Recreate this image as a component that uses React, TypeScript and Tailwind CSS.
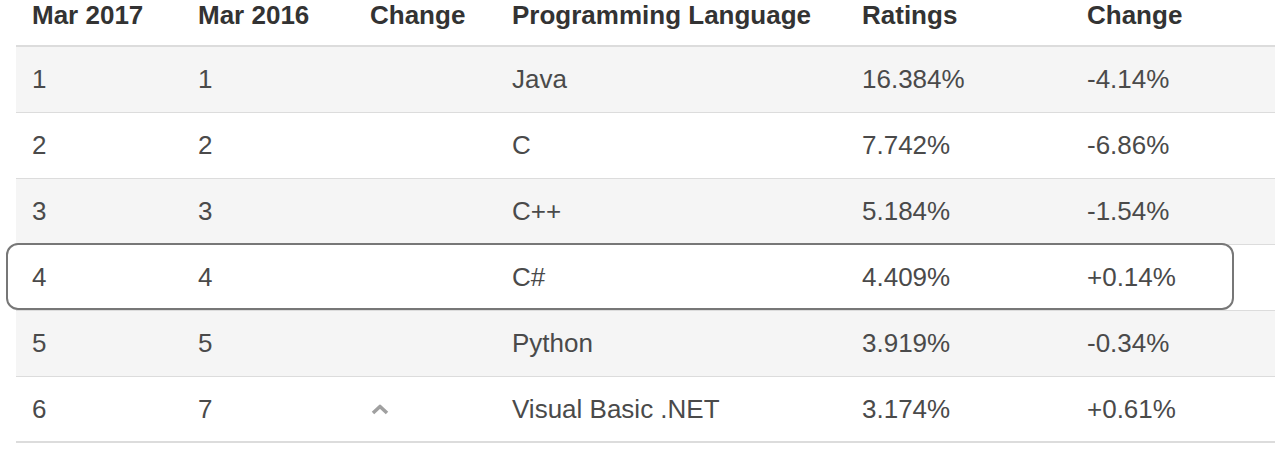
const rows = [
  { now: "1", prev: "1", up: false, lang: "Java", rating: "16.384%", change: "-4.14%" },
  { now: "2", prev: "2", up: false, lang: "C", rating: "7.742%", change: "-6.86%" },
  { now: "3", prev: "3", up: false, lang: "C++", rating: "5.184%", change: "-1.54%" },
  { now: "4", prev: "4", up: false, lang: "C#", rating: "4.409%", change: "+0.14%" },
  { now: "5", prev: "5", up: false, lang: "Python", rating: "3.919%", change: "-0.34%" },
  { now: "6", prev: "7", up: true, lang: "Visual Basic .NET", rating: "3.174%", change: "+0.61%" },
];

function ArrowUp() {
  return (
    <svg width="20" height="12" viewBox="0 0 20 12" className="block">
      <polyline
        points="3,10 10,3.5 17,10"
        fill="none"
        stroke="#a0a0a0"
        strokeWidth="3.6"
        strokeLinejoin="round"
      />
    </svg>
  );
}

export default function App() {
  return (
    <div className="relative w-[1275px] h-[450px] overflow-hidden bg-white font-['Liberation_Sans',Arial,sans-serif]">
      <table className="ml-4 w-[1259px] table-fixed border-collapse text-[26px]">
        <colgroup>
          <col className="w-[166px]" />
          <col className="w-[172px]" />
          <col className="w-[142px]" />
          <col className="w-[350px]" />
          <col className="w-[225px]" />
          <col className="w-[204px]" />
        </colgroup>
        <thead>
          <tr className="border-b-2 border-[#dcdcdc]">
            {["Mar 2017", "Mar 2016", "Change", "Programming Language", "Ratings", "Change"].map((h, i) => (
              <th
                key={i}
                className="h-[45px] pl-4 pb-[15px] text-left align-top font-bold leading-[30px] text-[#333] whitespace-nowrap"
              >
                {h}
              </th>
            ))}
          </tr>
        </thead>
        <tbody>
          {rows.map((r, i) => (
            <tr
              key={r.now}
              className={`${i % 2 === 0 ? "bg-[#f5f5f5]" : "bg-white"} ${
                i === rows.length - 1 ? "border-b-2" : "border-b"
              } border-[#dcdcdc] text-[#4a4a4a]`}
            >
              <td className="h-[66px] pl-4 align-middle leading-none">{r.now}</td>
              <td className="pl-4 align-middle leading-none">{r.prev}</td>
              <td className="pl-4 align-middle">{r.up && <ArrowUp />}</td>
              <td className="pl-4 align-middle leading-none whitespace-nowrap">{r.lang}</td>
              <td className="pl-4 align-middle leading-none">{r.rating}</td>
              <td className="pl-4 align-middle leading-none">{r.change}</td>
            </tr>
          ))}
        </tbody>
      </table>
      {/* highlight around the C# row */}
      <div className="absolute left-[6px] top-[243px] w-[1228px] h-[67px] rounded-[12px] border-2 border-[#777]" />
    </div>
  );
}
